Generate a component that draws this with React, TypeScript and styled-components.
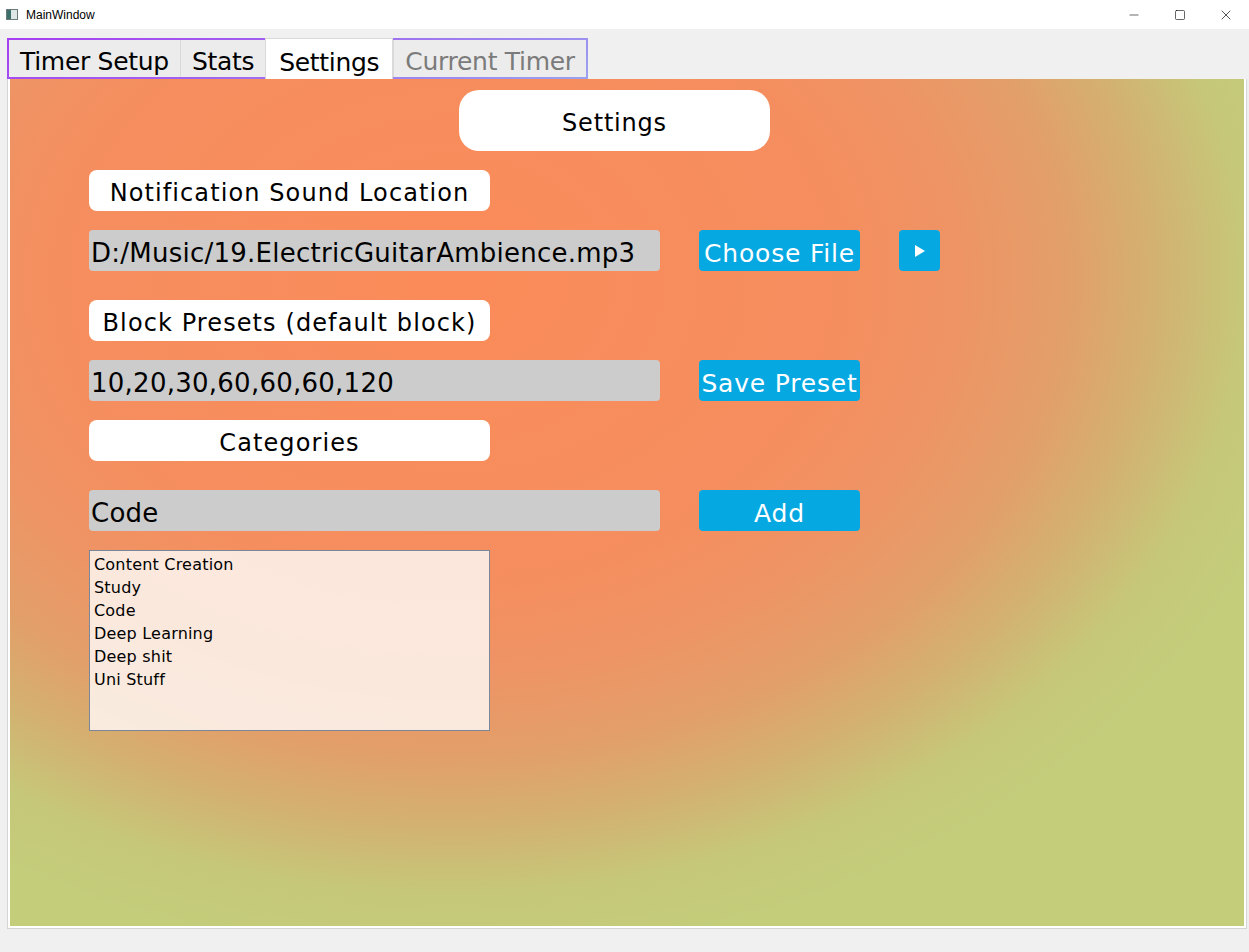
import React from "react";
import styled, { createGlobalStyle } from "styled-components";
import { Minus, Square, X } from "lucide-react";

const GlobalStyle = createGlobalStyle`
  html, body { margin: 0; padding: 0; background: #f0f0f0; }
  body { font-family: "DejaVu Sans", "Liberation Sans", sans-serif; }
  * { box-sizing: border-box; }
`;

const Window = styled.div`
  width: 1249px;
  height: 952px;
  display: flex;
  flex-direction: column;
  background: #f0f0f0;
  overflow: hidden;
`;

const TitleBar = styled.div`
  height: 29px;
  background: #ffffff;
  display: flex;
  align-items: center;
  padding-left: 6px;
  font-family: "Liberation Sans", "DejaVu Sans", sans-serif;
  font-size: 12px;
  color: #000;
`;

const AppIcon = styled.div`
  width: 12px;
  height: 11px;
  border: 1px solid #6b7b7b;
  background: linear-gradient(90deg, #3d6f6a 0 40%, #dfe6e6 40% 100%);
  margin-right: 8px;
`;

const TitleText = styled.span`
  flex: 1;
`;

const WinButton = styled.div`
  width: 46px;
  height: 29px;
  display: flex;
  align-items: center;
  justify-content: center;
  color: #000;
`;

const Body = styled.div`
  flex: 1;
  display: flex;
  flex-direction: column;
  padding: 9px 2px 23px 7px;
`;

const TabBar = styled.div`
  display: flex;
  align-self: flex-start;
  height: 41px;
  border: 2px solid;
  border-image: linear-gradient(160deg, #a63ff2 0%, #a060f0 40%, #9aa2f0 100%) 1;
`;

const Tab = styled.div<{ $active?: boolean; $muted?: boolean }>`
  display: flex;
  align-items: center;
  padding: 5px 11px 0;
  font-size: 25px;
  letter-spacing: -0.3px;
  background: ${(p) => (p.$active ? "#ffffff" : "#ececec")};
  color: ${(p) => (p.$muted ? "#7b7b7b" : "#000")};
  border-left: 1px solid #d9d9d9;
  &:first-child { border-left: none; }
  ${(p) =>
    p.$active &&
    `
    margin: -2px 0 -2px 0;
    padding: 7px 13px 0;
    border: 1px solid #d9d9d9;
    border-bottom: none;
    position: relative;
    z-index: 1;
  `}
`;

const Panel = styled.div`
  flex: 1;
  border: 1px solid #d4d4d4;
  border-top: none;
  box-shadow: inset 0 -2px 0 #fff, inset 2px 0 0 #fff, inset -2px 0 0 #fff;
  background: radial-gradient(
    ellipse 880px 680px at 443px 201px,
    #fb8b59 0%,
    #f58e5f 45%,
    #ee9465 58%,
    #e29f69 70%,
    #d3b171 80%,
    #c6c779 90%,
    #c3cd7a 100%
  );
  padding: 11px 0 0 81px;
  display: flex;
  flex-direction: column;
`;

const TitleRow = styled.div`
  display: flex;
  padding-left: 370px;
  margin-bottom: 19px;
`;

const TitleBox = styled.div`
  width: 311px;
  height: 61px;
  border-radius: 20px;
  background: #fff;
  display: flex;
  align-items: center;
  justify-content: center;
  padding-top: 5px;
  font-size: 24px;
  letter-spacing: 0.8px;
  color: #000;
`;

const Row = styled.div<{ $gap?: number }>`
  display: flex;
  gap: 39px;
  height: 41px;
  margin-bottom: ${(p) => p.$gap ?? 19}px;
`;

const Label = styled.div`
  width: 401px;
  height: 41px;
  background: #fff;
  border-radius: 8px;
  display: flex;
  align-items: center;
  justify-content: center;
  padding-top: 5px;
  font-size: 24px;
  letter-spacing: 1.1px;
  color: #000;
  white-space: nowrap;
`;

const Field = styled.div`
  width: 571px;
  height: 41px;
  background: #cccccc;
  border-radius: 4px;
  display: flex;
  align-items: center;
  padding: 5px 0 0 2px;
  font-size: 26px;
  color: #000;
  letter-spacing: 0.25px;
  white-space: nowrap;
  overflow: hidden;
`;

const Button = styled.div<{ $w?: number }>`
  width: ${(p) => p.$w ?? 161}px;
  height: 41px;
  background: #06a8e2;
  border-radius: 4px;
  color: #fff;
  display: flex;
  align-items: center;
  justify-content: center;
  padding-top: 5px;
  font-size: 25px;
  letter-spacing: 0.8px;
  white-space: nowrap;
`;

const PlayIcon = styled.svg`
  margin-top: -5px;
`;

const List = styled.div`
  width: 401px;
  height: 181px;
  border: 1px solid #7a8799;
  background: rgba(253, 244, 238, 0.88);
  padding: 3px 0 0 4px;
  font-size: 16px;
  letter-spacing: 0.2px;
  color: #000;
`;

const ListItem = styled.div`
  height: 23px;
  line-height: 22px;
`;

const categories = ["Content Creation", "Study", "Code", "Deep Learning", "Deep shit", "Uni Stuff"];

export default function App() {
  return (
    <Window>
      <GlobalStyle />
      <TitleBar>
        <AppIcon />
        <TitleText>MainWindow</TitleText>
        <WinButton><Minus size={14} strokeWidth={1} /></WinButton>
        <WinButton><Square size={12} strokeWidth={1.2} /></WinButton>
        <WinButton><X size={16} strokeWidth={1} /></WinButton>
      </TitleBar>
      <Body>
        <TabBar>
          <Tab>Timer Setup</Tab>
          <Tab>Stats</Tab>
          <Tab $active>Settings</Tab>
          <Tab $muted>Current Timer</Tab>
        </TabBar>
        <Panel>
          <TitleRow>
            <TitleBox>Settings</TitleBox>
          </TitleRow>
          <Row>
            <Label>Notification Sound Location</Label>
          </Row>
          <Row $gap={29}>
            <Field>D:/Music/19.ElectricGuitarAmbience.mp3</Field>
            <Button>Choose File</Button>
            <Button $w={41}>
              <PlayIcon width="12" height="12" viewBox="0 0 12 12">
                <polygon points="1,0 11,6 1,12" fill="#fff" />
              </PlayIcon>
            </Button>
          </Row>
          <Row>
            <Label>Block Presets (default block)</Label>
          </Row>
          <Row>
            <Field>10,20,30,60,60,60,120</Field>
            <Button>Save Preset</Button>
          </Row>
          <Row $gap={29}>
            <Label>Categories</Label>
          </Row>
          <Row>
            <Field>Code</Field>
            <Button>Add</Button>
          </Row>
          <List>
            {categories.map((c) => (
              <ListItem key={c}>{c}</ListItem>
            ))}
          </List>
        </Panel>
      </Body>
    </Window>
  );
}
